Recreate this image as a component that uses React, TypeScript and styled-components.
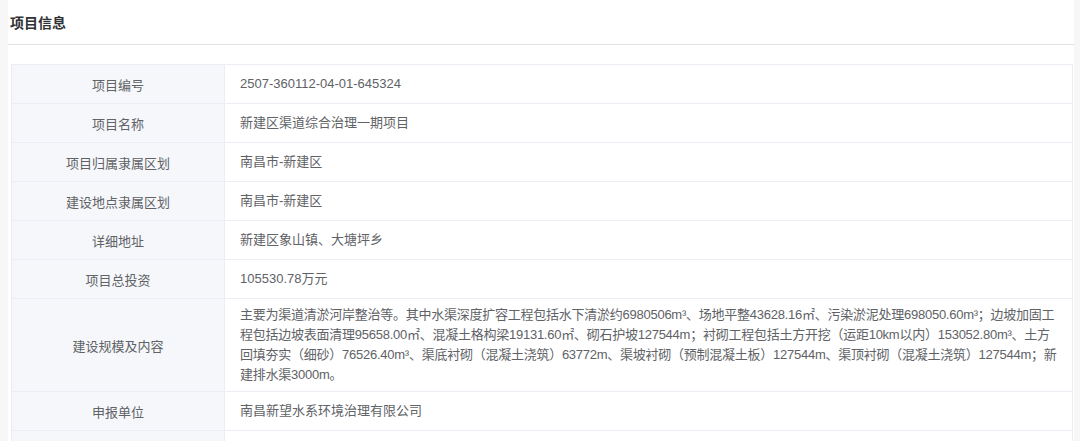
import React from "react";
import styled, { createGlobalStyle } from "styled-components";

const Global = createGlobalStyle`
  html, body { margin: 0; padding: 0; background: #f7f7f7; }
  body { font-family: "Liberation Sans", "Noto Sans CJK SC", sans-serif; }
`;

const Card = styled.div`
  margin-left: 8px;
  width: 1066px;
  min-height: 441px;
  background: #ffffff;
`;

const Header = styled.div`
  height: 44px;
  display: flex;
  align-items: center;
  padding-left: 2px;
  border-bottom: 1px solid #e2e2e2;
  font-size: 14px;
  font-weight: bold;
  color: #303133;
`;

const Body = styled.div`
  padding: 19px 0 0 3px;
`;

const Table = styled.div`
  width: 1061px;
  display: grid;
  grid-template-columns: 213px 1fr;
  border-top: 1px solid #ebeef5;
  border-left: 1px solid #ebeef5;
  font-size: 13px;
  color: #606266;
`;

const Label = styled.div`
  min-height: 38px;
  display: flex;
  align-items: center;
  justify-content: center;
  background: #f5f7fa;
  border-right: 1px solid #ebeef5;
  border-bottom: 1px solid #ebeef5;
`;

const Value = styled.div`
  min-height: 38px;
  display: flex;
  flex-direction: column;
  justify-content: center;
  padding: 6px 15px;
  box-sizing: border-box;
  line-height: 20px;
  border-right: 1px solid #ebeef5;
  border-bottom: 1px solid #ebeef5;
  overflow: hidden;
`;

const Line = styled.span`
  display: block;
  white-space: nowrap;
  letter-spacing: -0.25px;
`;

const desc = [
  "主要为渠道清淤河岸整治等。其中水渠深度扩容工程包括水下清淤约6980506m³、场地平整43628.16㎡、污染淤泥处理698050.60m³；边坡加固工",
  "程包括边坡表面清理95658.00㎡、混凝土格构梁19131.60㎡、砌石护坡127544m；衬砌工程包括土方开挖（运距10km以内）153052.80m³、土方",
  "回填夯实（细砂）76526.40m³、渠底衬砌（混凝土浇筑）63772m、渠坡衬砌（预制混凝土板）127544m、渠顶衬砌（混凝土浇筑）127544m；新",
  "建排水渠3000m。",
];

const rows: [string, string | string[]][] = [
  ["项目编号", "2507-360112-04-01-645324"],
  ["项目名称", "新建区渠道综合治理一期项目"],
  ["项目归属隶属区划", "南昌市-新建区"],
  ["建设地点隶属区划", "南昌市-新建区"],
  ["详细地址", "新建区象山镇、大塘坪乡"],
  ["项目总投资", "105530.78万元"],
  ["建设规模及内容", desc],
  ["申报单位", "南昌新望水系环境治理有限公司"],
  ["", ""],
];

export default function App() {
  return (
    <>
      <Global />
      <Card>
        <Header>项目信息</Header>
        <Body>
          <Table>
            {rows.map(([k, v], i) => (
              <React.Fragment key={i}>
                <Label>{k}</Label>
                <Value>
                  {Array.isArray(v) ? v.map((l, j) => <Line key={j}>{l}</Line>) : v}
                </Value>
              </React.Fragment>
            ))}
          </Table>
        </Body>
      </Card>
    </>
  );
}
